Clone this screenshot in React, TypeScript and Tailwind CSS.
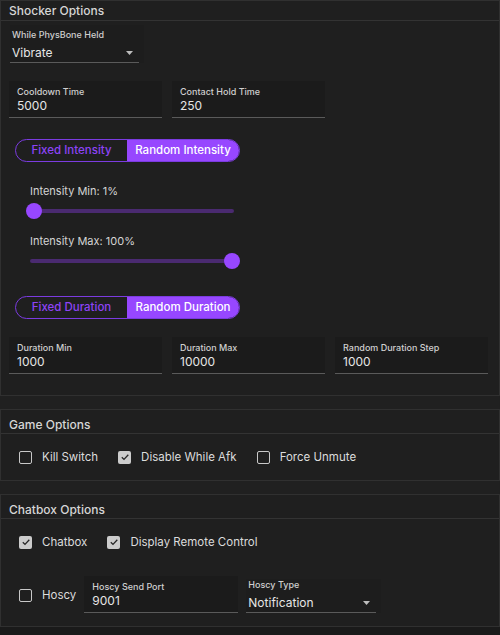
import { useState } from "react";

const font = { fontFamily: "Inter, 'Noto Sans', sans-serif" };

const Panel = ({
  title,
  children,
  className = "",
  compact = false,
}: {
  title: string;
  children: React.ReactNode;
  className?: string;
  compact?: boolean;
}) => (
  <section className="border border-[#303030] bg-[#1f1f1f]">
    <div
      className={`border-b border-[#333333] px-2 text-[12px] font-medium leading-[16px] text-[#d6d6d6] ${
        compact ? "h-[20px] pt-[2px]" : "h-[24px] pt-[7px]"
      }`}
    >
      {title}
    </div>
    <div className={className}>{children}</div>
  </section>
);

const TextField = ({ label, value, className = "" }: { label: string; value: string; className?: string }) => (
  <div className={`flex h-[37px] flex-col border-b border-[#5a5a5a] bg-[#1b1b1b] px-2 pt-[5px] ${className}`}>
    <span className="text-[9px] font-medium leading-[11px] text-[#cfcfcf]">{label}</span>
    <span className="mt-[2px] text-[12px] leading-[14px] text-[#e6e6e6]">{value}</span>
  </div>
);

const Select = ({ label, value, className = "" }: { label: string; value: string; className?: string }) => (
  <div className={`flex flex-col bg-[#1d1d1d] pr-[5px] ${className}`}>
    <span className="pl-[2px] text-[9px] font-medium leading-[11px] text-[#cfcfcf]">{label}</span>
    <div className="mt-[5px] flex h-[18px] items-center justify-between border-b border-[#5a5a5a] pb-[2px] pl-[2px] pr-[6px]">
      <span className="text-[12px] leading-[14px] text-[#e6e6e6]">{value}</span>
      <svg width="7" height="4" viewBox="0 0 7 4">
        <path d="M0 0h7L3.5 4z" fill="#bdbdbd" />
      </svg>
    </div>
  </div>
);

const Toggle = ({ left, right }: { left: string; right: string }) => (
  <div className="flex h-[23px] w-[225px] overflow-hidden rounded-full border border-[#7b3be0] text-[11.5px] font-medium">
    <div className="flex w-[111px] items-center justify-center text-[#8d43f5]">{left}</div>
    <div className="flex flex-1 items-center justify-center bg-[#9747ff] text-white">{right}</div>
  </div>
);

const Slider = ({ label, atEnd }: { label: string; atEnd: boolean }) => (
  <div className="flex flex-col">
    <span className="pl-[29px] text-[11px] leading-[14px] text-[#d4d4d4]">{label}</span>
    <div className="relative ml-[25px] mt-[5px] h-[16px] w-[214px]">
      <div className="absolute left-[4px] right-[6px] top-[6px] h-[4px] rounded-full bg-[#4a2a70]" />
      <div
        className={`absolute top-0 h-[16px] w-[16px] rounded-full bg-[#9747ff] ${atEnd ? "right-0" : "left-0"}`}
      />
    </div>
  </div>
);

const Check = ({ label, checked }: { label: string; checked: boolean }) => (
  <div className="flex items-center">
    {checked ? (
      <div className="flex h-[13px] w-[13px] items-center justify-center rounded-[2px] bg-[#cccccc]">
        <svg width="10" height="10" viewBox="0 0 10 10">
          <path d="M1.8 5.2l2.2 2.2 4.3-4.6" stroke="#262626" strokeWidth="1.3" fill="none" />
        </svg>
      </div>
    ) : (
      <div className="h-[13px] w-[13px] rounded-[2px] border-[1.5px] border-[#c8c8c8]" />
    )}
    <span className="ml-[10px] text-[11.5px] leading-[14px] text-[#dcdcdc]">{label}</span>
  </div>
);

export default function App() {
  const [ready] = useState(true);

  return (
    <div className="min-h-screen bg-[#1a1a1a]" style={font}>
      {ready && (
        <div className="flex flex-col gap-[13px] bg-[#202020]">
          <Panel title="Shocker Options" compact className="px-2 pb-[21px]">
            <Select label="While PhysBone Held" value="Vibrate" className="ml-[1px] mt-[4px] w-[134px] pt-[4px]" />
            <div className="mt-[18px] flex gap-[10px]">
              <TextField label="Cooldown Time" value="5000" className="w-[153px]" />
              <TextField label="Contact Hold Time" value="250" className="w-[153px]" />
            </div>
            <div className="ml-[6px] mt-[21px]">
              <Toggle left="Fixed Intensity" right="Random Intensity" />
            </div>
            <div className="-ml-2 mt-[22px] flex flex-col gap-[15px]">
              <Slider label="Intensity Min: 1%" atEnd={false} />
              <Slider label="Intensity Max: 100%" atEnd={true} />
            </div>
            <div className="ml-[6px] mt-[27px]">
              <Toggle left="Fixed Duration" right="Random Duration" />
            </div>
            <div className="mt-[18px] flex gap-[10px]">
              <TextField label="Duration Min" value="1000" className="w-[153px]" />
              <TextField label="Duration Max" value="10000" className="w-[153px]" />
              <TextField label="Random Duration Step" value="1000" className="w-[153px]" />
            </div>
          </Panel>

          <Panel title="Game Options" className="flex h-[46px] items-center gap-[20px] px-[18px]">
            <Check label="Kill Switch" checked={false} />
            <Check label="Disable While Afk" checked={true} />
            <Check label="Force Unmute" checked={false} />
          </Panel>

          <Panel title="Chatbox Options" className="px-[18px] pb-[13px]">
            <div className="mt-[16px] flex items-center gap-[20px]">
              <Check label="Chatbox" checked={true} />
              <Check label="Display Remote Control" checked={true} />
            </div>
            <div className="mt-[27px] flex items-end">
              <div className="mb-[11px]">
                <Check label="Hoscy" checked={false} />
              </div>
              <TextField label="Hoscy Send Port" value="9001" className="ml-[8px] w-[154px]" />
              <Select label="Hoscy Type" value="Notification" className="ml-[8px] w-[135px]" />
            </div>
          </Panel>
        </div>
      )}
    </div>
  );
}
